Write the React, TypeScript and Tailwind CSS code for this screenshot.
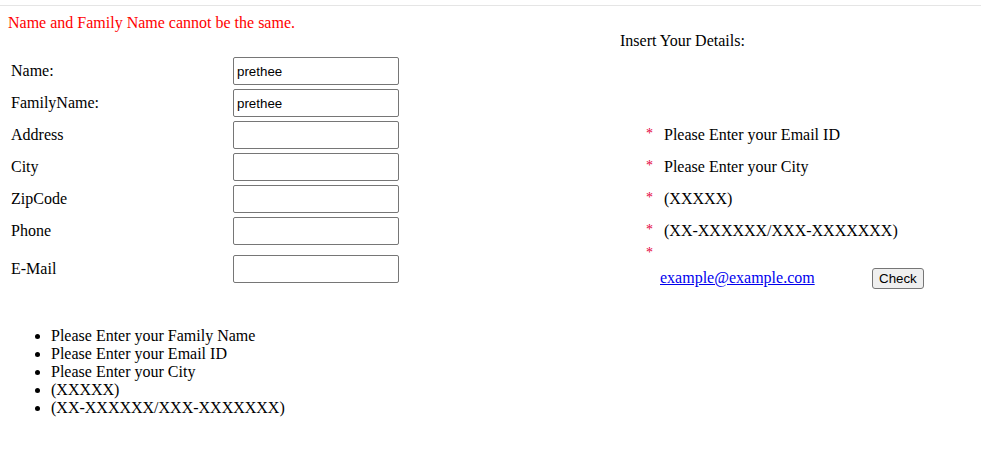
import React from "react";

const serif = { fontFamily: '"Liberation Serif", "Times New Roman", serif' };

function Row({ label, value }: { label: string; value?: string }) {
  return (
    <div className="flex items-center h-[32px]">
      <div className="w-[225px] pl-[3px] text-[16px] leading-[18px] text-black">{label}</div>
      <input
        readOnly
        value={value ?? ""}
        className="w-[166px] h-[28px] border border-[#767676] rounded-[2px] px-[3px] text-[13.33px] text-black bg-white outline-none"
        style={{ fontFamily: '"Liberation Sans", Arial, sans-serif' }}
      />
    </div>
  );
}

function Req({ children }: { children?: React.ReactNode }) {
  return (
    <div className="flex items-center h-[32px]">
      <span className="w-[18px] pl-[26px] box-content text-[#e4003a] text-[14px] leading-[18px] -mt-[3px]">*</span>
      <span className="text-[16px] leading-[18px] text-black">{children}</span>
    </div>
  );
}

export default function App() {
  return (
    <div className="w-[981px] h-[464px] bg-white text-black" style={serif}>
      <div className="h-[5px]" />
      <div className="border-t border-[#e5e5e5]" />
      <div className="flex">
        <div className="w-[620px]">
          <div className="pl-[8px] pt-[8px] text-[16px] leading-[18px] text-[#ff0000]">
            Name and Family Name cannot be the same.
          </div>
          <div className="pl-[8px] mt-[23px]">
            <Row label="Name:" value="prethee" />
            <Row label="FamilyName:" value="prethee" />
            <Row label="Address" />
            <Row label="City" />
            <Row label="ZipCode" />
            <Row label="Phone" />
            <div className="flex items-center h-[32px] mt-[6px]">
              <div className="w-[225px] pl-[3px] text-[16px] leading-[18px] text-black">E-Mail</div>
              <input
                readOnly
                value=""
                className="w-[166px] h-[28px] border border-[#767676] rounded-[2px] px-[3px] text-[13.33px] bg-white outline-none"
                style={{ fontFamily: '"Liberation Sans", Arial, sans-serif' }}
              />
            </div>
          </div>
        </div>
        <div className="flex-1">
          <div className="pt-[26px] text-[16px] leading-[18px]">Insert Your Details:</div>
          <div className="mt-[69px]">
            <Req>Please Enter your Email ID</Req>
            <Req>Please Enter your City</Req>
            <Req>(XXXXX)</Req>
            <Req>(XX-XXXXXX/XXX-XXXXXXX)</Req>
            <div className="flex items-center h-[20px] mt-[-4px]">
              <span className="pl-[26px] text-[#e4003a] text-[14px] leading-[18px]">*</span>
            </div>
            <div className="flex items-center h-[24px] pl-[40px] mt-[3px]">
              <a href="#" className="w-[212px] text-[16px] leading-[18px] text-[#0000ee] underline">
                example@example.com
              </a>
              <button
                className="h-[21px] px-[6px] border border-[#767676] rounded-[3px] bg-[#efefef] text-[13.33px] leading-[15px] text-black"
                style={{ fontFamily: '"Liberation Sans", Arial, sans-serif' }}
              >
                Check
              </button>
            </div>
          </div>
        </div>
      </div>
      <ul className="list-disc pl-[51px] mt-[37px] text-[16px] leading-[18px]">
        <li>Please Enter your Family Name</li>
        <li>Please Enter your Email ID</li>
        <li>Please Enter your City</li>
        <li>(XXXXX)</li>
        <li>(XX-XXXXXX/XXX-XXXXXXX)</li>
      </ul>
    </div>
  );
}
